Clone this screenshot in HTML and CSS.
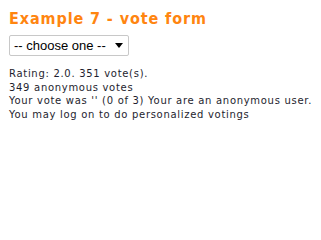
FILE: index.html
```html
<!DOCTYPE html>
<html>
<head>
<meta charset="utf-8">
<link rel="stylesheet" href="styles.css">
</head>
<body>
<h2 class="title">Example 7 - vote form</h2>
<div class="form-row">
  <div class="select"><span class="select-label">-- choose one --</span><span class="arrow"></span></div>
</div>
<div class="info">
  <div>Rating: 2.0. 351 vote(s).</div>
  <div>349 anonymous votes</div>
  <div>Your vote was '' (0 of 3) Your are an anonymous user.</div>
  <div>You may log on to do personalized votings</div>
</div>
</body>
</html>
```
FILE: styles.css
```css
html, body { margin: 0; padding: 0; background: #fff; }
body { padding: 8px 9px; font-family: "DejaVu Sans", Verdana, sans-serif; }
.title {
  margin: 0;
  font-family: "DejaVu Sans Condensed", "DejaVu Sans", sans-serif;
  font-size: 16px;
  font-weight: bold;
  letter-spacing: 0.9px;
  color: #ff8510;
  line-height: 20px;
  padding-top: 1px;
}
.form-row { margin-top: 6px; }
.select {
  display: inline-flex;
  align-items: center;
  width: 120px;
  height: 21px;
  box-sizing: border-box;
  border: 1px solid #c8c8c8;
  border-radius: 2px;
  padding: 0 5px 0 4px;
  font-family: "Liberation Sans", Arial, sans-serif;
  font-size: 13px;
  color: #000;
}
.select-label { flex: 1; }
.arrow {
  width: 0; height: 0;
  border-left: 4px solid transparent;
  border-right: 4px solid transparent;
  border-top: 5px solid #000;
}
.info {
  margin-top: 11px;
  font-size: 10px;
  letter-spacing: 0.7px;
  line-height: 13.5px;
  color: #1e1e2e;
}
```
